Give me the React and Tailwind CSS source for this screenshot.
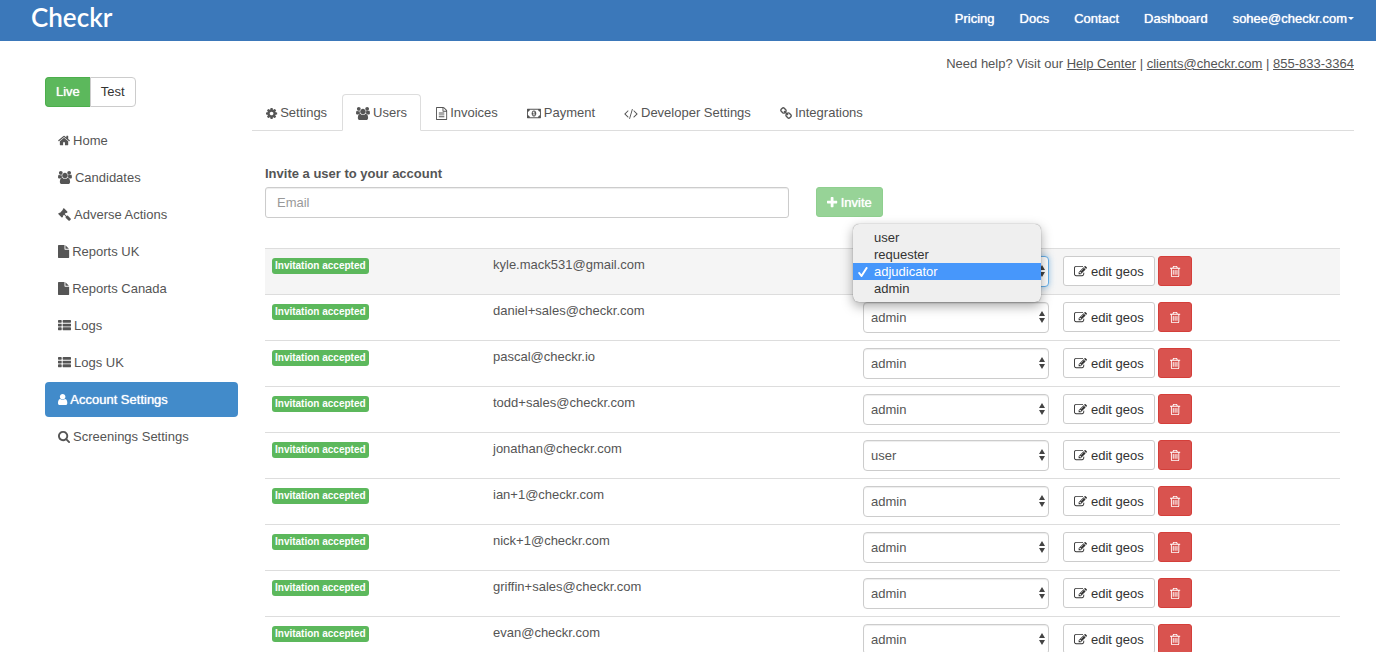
import { useState } from 'react'

// Each icon is cropped to its own advance width: [x offset, width, path]
const ICONS = {
  home: [64, 1664, 'M1472 992v480q0 26-19 45t-45 19h-384v-384h-256v384h-384q-26 0-45-19t-19-45v-480q0-1 .5-3t.5-3l575-474 575 474q1 2 1 6zm223-69l-62 74q-8 9-21 11h-3q-13 0-21-7l-692-577-692 577q-12 8-24 7-13-2-21-11l-62-74q-8-10-7-23.5t11-21.5l719-599q32-26 76-26t76 26l244 204v-195q0-14 9-23t23-9h192q14 0 23 9t9 23v408l219 182q10 8 11 21.5t-7 23.5z'],
  users: [0, 1920, 'M593 896q-162 5-265 128h-134q-82 0-138-40.5t-56-118.5q0-353 124-353 6 0 43.5 21t97.5 42.5 119 21.5q67 0 133-23-5 37-5 66 0 159 81 287zm1071 637q0 120-73 189.5t-194 69.5h-874q-121 0-194-69.5t-73-189.5q0-53 3.5-103.5t14-109 26.5-108.5 43-97.5 62-81 85.5-53.5 111.5-20q10 0 43 21.5t73 48 107 48 135 21.5 135-21.5 107-48 73-48 43-21.5q61 0 111.5 20t85.5 53.5 62 81 43 97.5 26.5 108.5 14 109 3.5 103.5zm-1024-1277q0 106-75 181t-181 75-181-75-75-181 75-181 181-75 181 75 75 181zm704 384q0 159-112.5 271.5t-271.5 112.5-271.5-112.5-112.5-271.5 112.5-271.5 271.5-112.5 271.5 112.5 112.5 271.5zm576 225q0 78-56 118.5t-138 40.5h-134q-103-123-265-128 81-128 81-287 0-29-5-66 66 23 133 23 59 0 119-21.5t97.5-42.5 43.5-21q124 0 124 353zm-128-609q0 106-75 181t-181 75-181-75-75-181 75-181 181-75 181 75 75 181z'],
  gavel: [0, 1792, 'M1771 1536q0 53-37 90l-107 108q-39 37-91 37-53 0-90-37l-363-364q-38-36-38-90 0-53 43-96l-256-256-126 126q-14 14-34 14t-34-14q2 2 12.5 12t12.5 13 10 11.5 10 13.5 6 13.5 5.5 16.5 1.5 18q0 38-28 68-3 3-16.5 18t-19 20.5-18.5 16.5-22 15.5-22 9-26 4.5q-40 0-68-28l-408-408q-28-28-28-68 0-13 4.5-26t9-22 15.5-22 16.5-18.5 20.5-19 18-16.5q30-28 68-28 10 0 18 1.5t16.5 5.5 13.5 6 13.5 10 11.5 10 13 12.5 12 12.5q-14-14-14-34t14-34l348-348q14-14 34-14t34 14q-2-2-12.5-12t-12.5-13-10-11.5-10-13.5-6-13.5-5.5-16.5-1.5-18q0-38 28-68 3-3 16.5-18t19-20.5 18.5-16.5 22-15.5 22-9 26-4.5q40 0 68 28l408 408q28 28 28 68 0 13-4.5 26t-9 22-15.5 22-16.5 18.5-20.5 19-18 16.5q-30 28-68 28-10 0-18-1.5t-16.5-5.5-13.5-6-13.5-10-11.5-10-13-12.5-12-12.5q14 14 14 34t-14 34l-126 126 256 256q43-43 96-43 52 0 91 37l363 363q37 39 37 91z'],
  file: [128, 1536, 'M1152 512v-472q22 14 36 28l408 408q14 14 28 36h-472zm-128 32q0 40 28 68t68 28h544v1056q0 40-28 68t-68 28h-1344q-40 0-68-28t-28-68v-1600q0-40 28-68t68-28h800v544z'],
  list: [0, 1792, 'M512 1248v192q0 40-28 68t-68 28h-320q-40 0-68-28t-28-68v-192q0-40 28-68t68-28h320q40 0 68 28t28 68zm0-512v192q0 40-28 68t-68 28h-320q-40 0-68-28t-28-68v-192q0-40 28-68t68-28h320q40 0 68 28t28 68zm1280 512v192q0 40-28 68t-68 28h-960q-40 0-68-28t-28-68v-192q0-40 28-68t68-28h960q40 0 68 28t28 68zm-1280-1024v192q0 40-28 68t-68 28h-320q-40 0-68-28t-28-68v-192q0-40 28-68t68-28h320q40 0 68 28t28 68zm1280 512v192q0 40-28 68t-68 28h-960q-40 0-68-28t-28-68v-192q0-40 28-68t68-28h960q40 0 68 28t28 68zm0-512v192q0 40-28 68t-68 28h-960q-40 0-68-28t-28-68v-192q0-40 28-68t68-28h960q40 0 68 28t28 68z'],
  user: [256, 1280, 'M1536 1399q0 109-62.5 187t-150.5 78h-854q-88 0-150.5-78t-62.5-187q0-85 8.5-160.5t31.5-152 58.5-131 94-89 134.5-34.5q131 128 313 128t313-128q76 0 134.5 34.5t94 89 58.5 131 31.5 152 8.5 160.5zm-256-887q0 159-112.5 271.5t-271.5 112.5-271.5-112.5-112.5-271.5 112.5-271.5 271.5-112.5 271.5 112.5 112.5 271.5z'],
  search: [64, 1664, 'M1216 832q0-185-131.5-316.5t-316.5-131.5-316.5 131.5-131.5 316.5 131.5 316.5 316.5 131.5 316.5-131.5 131.5-316.5zm512 832q0 52-38 90t-90 38q-54 0-90-38l-343-342q-179 124-399 124-143 0-273.5-55.5t-225-150-150-225-55.5-273.5 55.5-273.5 150-225 225-150 273.5-55.5 273.5 55.5 225 150 150 225 55.5 273.5q0 220-124 399l343 343q37 37 37 90z'],
  cog: [128, 1536, 'M1152 896q0-106-75-181t-181-75-181 75-75 181 75 181 181 75 181-75 75-181zm512-109v222q0 12-8 23t-20 13l-185 28q-19 54-39 91 35 50 107 138 10 12 10 25t-9 23q-27 37-99 108t-94 71q-12 0-26-9l-138-108q-44 23-91 38-16 136-29 186-7 28-36 28h-222q-14 0-24.5-8.5t-11.5-21.5l-28-184q-49-16-90-37l-141 107q-10 9-25 9-14 0-25-11-126-114-165-168-7-10-7-23 0-12 8-23 15-21 51-66.5t54-70.5q-27-50-41-99l-183-27q-13-2-21-12.5t-8-23.5v-222q0-12 8-23t19-13l186-28q14-46 39-92-40-57-107-138-10-12-10-24 0-10 9-23 26-36 98.5-107.5t94.5-71.5q13 0 26 10l138 107q44-23 91-38 16-136 29-186 7-28 36-28h222q14 0 24.5 8.5t11.5 21.5l28 184q49 16 90 37l142-107q9-9 24-9 13 0 25 10 129 119 165 170 7 8 7 22 0 12-8 23-15 21-51 66.5t-54 70.5q26 50 41 98l183 28q13 2 21 12.5t8 23.5z'],
  invoice: [128, 1536, 'M1596 380q28 28 48 76t20 88v1152q0 40-28 68t-68 28h-1344q-40 0-68-28t-28-68v-1600q0-40 28-68t68-28h896q40 0 88 20t76 48zm-444-244v376h376q-10-29-22-41l-313-313q-12-12-41-22zm384 1528v-1024h-416q-40 0-68-28t-28-68v-416h-768v1536h1280zm-1024-864q0-14 9-23t23-9h704q14 0 23 9t9 23v64q0 14-9 23t-23 9h-704q-14 0-23-9t-9-23v-64zm736 224q14 0 23 9t9 23v64q0 14-9 23t-23 9h-704q-14 0-23-9t-9-23v-64q0-14 9-23t23-9h704zm0 256q14 0 23 9t9 23v64q0 14-9 23t-23 9h-704q-14 0-23-9t-9-23v-64q0-14 9-23t23-9h704z'],
  money: [0, 1920, 'M768 1152h384v-96h-128v-448h-114l-148 137 77 80q42-37 55-57h2v288h-128v96zm512-256q0 70-21 142t-59.5 134-101.5 101-138 39-138-39-101.5-101-59.5-134-21-142 21-142 59.5-134 101.5-101 138-39 138 39 101.5 101 59.5 134 21 142zm512 256v-512q-106 0-181-75t-75-181h-1152q0 106-75 181t-181 75v512q106 0 181 75t75 181h1152q0-106 75-181t181-75zm128-832v1152q0 26-19 45t-45 19h-1792q-26 0-45-19t-19-45v-1152q0-26 19-45t45-19h1792q26 0 45 19t19 45z'],
  code: [0, 1920, 'M617 1399l-50 50q-10 10-23 10t-23-10l-466-466q-10-10-10-23t10-23l466-466q10-10 23-10t23 10l50 50q10 10 10 23t-10 23l-393 393 393 393q10 10 10 23t-10 23zm591-1067l-373 1291q-4 13-15.5 19.5t-23.5 2.5l-62-17q-13-4-19.5-15.5t-2.5-24.5l373-1291q4-13 15.5-19.5t23.5-2.5l62 17q13 4 19.5 15.5t2.5 24.5zm657 651l-466 466q-10 10-23 10t-23-10l-50-50q-10-10-10-23t10-23l393-393-393-393q-10-10-10-23t10-23l50-50q10-10 23-10t23 10l466 466q10 10 10 23t-10 23z'],
  link: [64, 1664, 'M1520 1216q0-40-28-68l-208-208q-28-28-68-28-42 0-72 32 3 3 19 18.5t21.5 21.5 15 19 13 25.5 3.5 27.5q0 40-28 68t-68 28q-15 0-27.5-3.5t-25.5-13-19-15-21.5-21.5-18.5-19q-33 31-33 73 0 40 28 68l206 207q27 27 68 27 40 0 68-26l147-146q28-28 28-67zm-703-705q0-40-28-68l-206-207q-28-28-68-28-39 0-68 27l-147 146q-28 28-28 67 0 40 28 68l208 208q27 27 68 27 42 0 72-31-3-3-19-18.5t-21.5-21.5-15-19-13-25.5-3.5-27.5q0-40 28-68t68-28q15 0 27.5 3.5t25.5 13 19 15 21.5 21.5 18.5 19q33-31 33-73zm895 705q0 120-85 203l-147 146q-83 83-203 83-121 0-204-85l-206-207q-83-83-83-203 0-123 88-209l-88-88q-86 88-208 88-120 0-204-84l-208-208q-84-84-84-204t85-203l147-146q83-83 203-83 121 0 204 85l206 207q83 83 83 203 0 123-88 209l88 88q86-88 208-88 120 0 204 84l208 208q84 84 84 204z'],
  plus: [192, 1408, 'M1600 736v192q0 40-28 68t-68 28h-416v416q0 40-28 68t-68 28h-192q-40 0-68-28t-28-68v-416h-416q-40 0-68-28t-28-68v-192q0-40 28-68t68-28h416v-416q0-40 28-68t68-28h192q40 0 68 28t28 68v416h416q40 0 68 28t28 68z'],
  edit: [0, 1792, 'M888 1184l116-116-152-152-116 116v56h96v96h56zm440-720q-16-16-33 1l-350 350q-17 17-1 33t33-1l350-350q17-17 1-33zm80 594v190q0 119-84.5 203.5t-203.5 84.5h-832q-119 0-203.5-84.5t-84.5-203.5v-832q0-119 84.5-203.5t203.5-84.5h832q63 0 117 25 15 7 18 23 3 17-9 29l-49 49q-14 14-32 8-23-6-45-6h-832q-66 0-113 47t-47 113v832q0 66 47 113t113 47h832q66 0 113-47t47-113v-126q0-13 9-22l64-64q15-15 35-7t20 29zm-96-738l288 288-672 672h-288v-288zm444 132l-92 92-288-288 92-92q28-28 68-28t68 28l152 152q28 28 28 68t-28 68z'],
  trash: [192, 1408, 'M704 736v576q0 14-9 23t-23 9h-64q-14 0-23-9t-9-23v-576q0-14 9-23t23-9h64q14 0 23 9t9 23zm256 0v576q0 14-9 23t-23 9h-64q-14 0-23-9t-9-23v-576q0-14 9-23t23-9h64q14 0 23 9t9 23zm256 0v576q0 14-9 23t-23 9h-64q-14 0-23-9t-9-23v-576q0-14 9-23t23-9h64q14 0 23 9t9 23zm128 724v-948h-896v948q0 22 7 40.5t14.5 27 10.5 8.5h832q3 0 10.5-8.5t14.5-27 7-40.5zm-672-1076h448l-48-117q-7-9-17-11h-317q-10 2-17 11zm928 32v64q0 14-9 23t-23 9h-96v948q0 83-47 143.5t-113 60.5h-832q-66 0-113-58.5t-47-141.5v-952h-96q-14 0-23-9t-9-23v-64q0-14 9-23t23-9h309l70-167q15-37 54-63t79-26h320q40 0 79 26t54 63l70 167h309q14 0 23 9t9 23z'],
}

const NAV_LINKS = ['Pricing', 'Docs', 'Contact', 'Dashboard']

const SIDEBAR = [
  { icon: 'home', label: 'Home' },
  { icon: 'users', label: 'Candidates' },
  { icon: 'gavel', label: 'Adverse Actions' },
  { icon: 'file', label: 'Reports UK' },
  { icon: 'file', label: 'Reports Canada' },
  { icon: 'list', label: 'Logs' },
  { icon: 'list', label: 'Logs UK' },
  { icon: 'user', label: 'Account Settings', active: true },
  { icon: 'search', label: 'Screenings Settings' },
]

const TABS = [
  { icon: 'cog', label: 'Settings' },
  { icon: 'users', label: 'Users', active: true },
  { icon: 'invoice', label: 'Invoices' },
  { icon: 'money', label: 'Payment' },
  { icon: 'code', label: 'Developer Settings' },
  { icon: 'link', label: 'Integrations' },
]

const ROLES = ['user', 'requester', 'adjudicator', 'admin']

const USERS = [
  { email: 'kyle.mack531@gmail.com', role: 'adjudicator' },
  { email: 'daniel+sales@checkr.com', role: 'admin' },
  { email: 'pascal@checkr.io', role: 'admin' },
  { email: 'todd+sales@checkr.com', role: 'admin' },
  { email: 'jonathan@checkr.com', role: 'user' },
  { email: 'ian+1@checkr.com', role: 'admin' },
  { email: 'nick+1@checkr.com', role: 'admin' },
  { email: 'griffin+sales@checkr.com', role: 'admin' },
  { email: 'evan@checkr.com', role: 'admin' },
]

function Icon({ name }) {
  const [x, width, d] = ICONS[name]
  return (
    <svg viewBox={`${x} 0 ${width} 1792`} className="h-[13px] w-auto shrink-0 overflow-visible" fill="currentColor" aria-hidden="true">
      <path d={d} />
    </svg>
  )
}

function Header() {
  return (
    <header className="h-[41px] bg-[#3b78ba] pl-[31px] pr-[22px] flex items-center justify-between text-white">
      <a href="#" className="font-['Lato',sans-serif] text-[26px] leading-9 font-semibold pb-2">Checkr</a>
      <nav className="flex items-center gap-[25px] pb-1 [text-shadow:0_0_1px_#fff]">
        {NAV_LINKS.map(link => <a key={link} href="#">{link}</a>)}
        <button className="flex items-center gap-px [text-shadow:inherit]">
          sohee@checkr.com
          <svg viewBox="0 0 6 3" className="w-[6px] h-[3px]" fill="currentColor" aria-hidden="true"><path d="M0 0h6L3 3z" /></svg>
        </button>
      </nav>
    </header>
  )
}

function Sidebar() {
  return (
    <aside className="w-[193px] shrink-0 pt-9">
      <div className="flex">
        <button className="h-[30px] px-[10px] rounded-l bg-[#5cb85c] border border-r-0 border-[#4cae4c] text-white [text-shadow:0_0_1px_#fff]">Live</button>
        <button className="h-[30px] px-[10px] rounded-r bg-white border border-[#ccc] text-[#333]">Test</button>
      </div>
      <ul className="mt-4 flex flex-col gap-[2px]">
        {SIDEBAR.map(({ icon, label, active }) => (
          <li key={label}>
            <a href="#" className={`h-[35px] px-[13px] flex items-center gap-[3px] rounded ${active ? 'bg-[#428bca] text-white [text-shadow:0_0_1px_#fff]' : ''}`}>
              <Icon name={icon} />
              {label}
            </a>
          </li>
        ))}
      </ul>
    </aside>
  )
}

function RoleMenu({ value, onPick }) {
  return (
    <ul role="listbox" aria-label="Role" className="absolute z-10 left-[-10px] top-[-32px] w-[188px] py-[5px] rounded-md bg-[#efefef] text-[#333] shadow-[0_0_1px_rgba(0,0,0,0.5),0_4px_12px_rgba(0,0,0,0.35)]">
      {ROLES.map(role => (
        <li key={role} role="option" aria-selected={role === value} onClick={() => onPick(role)}
          className={`h-[17px] leading-[17px] flex items-center gap-px ${role === value ? 'bg-[#4797fb] text-white' : ''}`}>
          <span className="w-5 flex justify-center">
            {role === value && (
              <svg viewBox="0 0 10 10" className="w-[10px] h-[10px]" fill="none" stroke="currentColor" strokeWidth="2" strokeLinecap="round" strokeLinejoin="round" aria-hidden="true">
                <path d="M1.2 6l2.3 3L8.6 1" />
              </svg>
            )}
          </span>
          {role}
        </li>
      ))}
    </ul>
  )
}

function UserRow({ user, open }) {
  const [role, setRole] = useState(user.role)
  const [menu, setMenu] = useState(open)
  return (
    <tr className={`border-t border-[#ddd] align-top ${open ? 'bg-[#f5f5f5]' : ''}`}>
      <td className="p-[7px]">
        <div className="py-[2px]">
          <span className="block w-fit h-4 px-[3px] rounded-[3px] bg-[#5cb85c] text-white text-[10px] leading-4 font-bold">Invitation accepted</span>
        </div>
      </td>
      <td className="p-[7px]">{user.email}</td>
      <td className="p-[7px]">
        <div className="relative">
          <select value={role} onChange={e => setRole(e.target.value)} aria-label={`Role of ${user.email}`}
            className={`block w-full h-[31px] pl-[7px] appearance-none rounded border bg-white ${menu ? 'border-[#66afe9] shadow-[0_0_6px_rgba(102,175,233,0.6)]' : 'border-[#ccc] shadow-[inset_0_1px_1px_rgba(0,0,0,0.075)]'}`}>
            {ROLES.map(r => <option key={r}>{r}</option>)}
          </select>
          <svg viewBox="0 0 6 12" className="absolute right-1 top-[9px] w-[6px] h-3 pointer-events-none" fill="#444" aria-hidden="true">
            <path d="M3 0l3 5H0zM3 12l3-5H0z" />
          </svg>
          {menu && <RoleMenu value={role} onPick={r => { setRole(r); setMenu(false) }} />}
        </div>
      </td>
      <td className="p-[7px]">
        <div className="flex gap-[3px]">
          <button className="h-[30px] px-[10px] pt-px flex items-center gap-1 rounded-[3px] border border-[#ccc] bg-white text-[#333]">
            <Icon name="edit" />
            edit geos
          </button>
          <button aria-label={`Remove ${user.email}`} className="w-[34px] h-[30px] flex items-center justify-center rounded-[3px] border border-[#d43f3a] bg-[#d9534f] text-white">
            <Icon name="trash" />
          </button>
        </div>
      </td>
    </tr>
  )
}

export default function App() {
  return (
    <div className="h-screen overflow-hidden bg-white font-['Liberation_Sans',Arial,sans-serif] text-[13px] leading-[18px] text-[#555]">
      <Header />
      <div className="flex gap-[14px] pl-[45px] pr-[22px]">
        <Sidebar />
        <main className="flex-1 min-w-0 pt-[14px]">
          <p className="text-right">
            Need help? Visit our <a href="#" className="underline">Help Center</a> | <a href="#" className="underline">clients@checkr.com</a> | <a href="#" className="underline">855-833-3364</a>
          </p>

          {/* Tabs */}
          <ul className="mt-[21px] flex gap-px border-b border-[#ddd]">
            {TABS.map(({ icon, label, active }) => (
              <li key={label} className="-mb-px">
                <a href="#" className={`flex items-center gap-[3px] px-[13px] pt-[9px] pb-2 rounded-t border ${active ? 'border-[#ddd] border-b-white bg-white' : 'border-transparent'}`}>
                  <Icon name={icon} />
                  {label}
                </a>
              </li>
            ))}
          </ul>

          <section className="pl-[13px] pr-[14px] pt-[34px]">
            <form onSubmit={e => e.preventDefault()}>
              <label htmlFor="invite-email" className="block mb-1 font-bold">Invite a user to your account</label>
              <div className="flex">
                <div className="w-1/2 pr-[14px]">
                  <input id="invite-email" type="email" placeholder="Email"
                    className="block w-full h-[31px] px-[11px] rounded-[3px] border border-[#ccc] shadow-[inset_0_1px_1px_rgba(0,0,0,0.075)] placeholder:text-[#999]" />
                </div>
                <button className="ml-[13px] h-[30px] px-[10px] pt-px flex items-center gap-1 rounded-[3px] border border-[#8fcf8f] bg-[#97d397] text-white [text-shadow:0_0_1px_#fff]">
                  <Icon name="plus" />
                  Invite
                </button>
              </div>
            </form>

            <table className="mt-[30px] w-full table-fixed border-collapse">
              <colgroup>
                <col className="w-[221px]" />
                <col />
                <col className="w-[200px]" />
                <col className="w-[284px]" />
              </colgroup>
              <tbody>
                {USERS.map((user, i) => <UserRow key={user.email} user={user} open={i === 0} />)}
              </tbody>
            </table>
          </section>
        </main>
      </div>
    </div>
  )
}
